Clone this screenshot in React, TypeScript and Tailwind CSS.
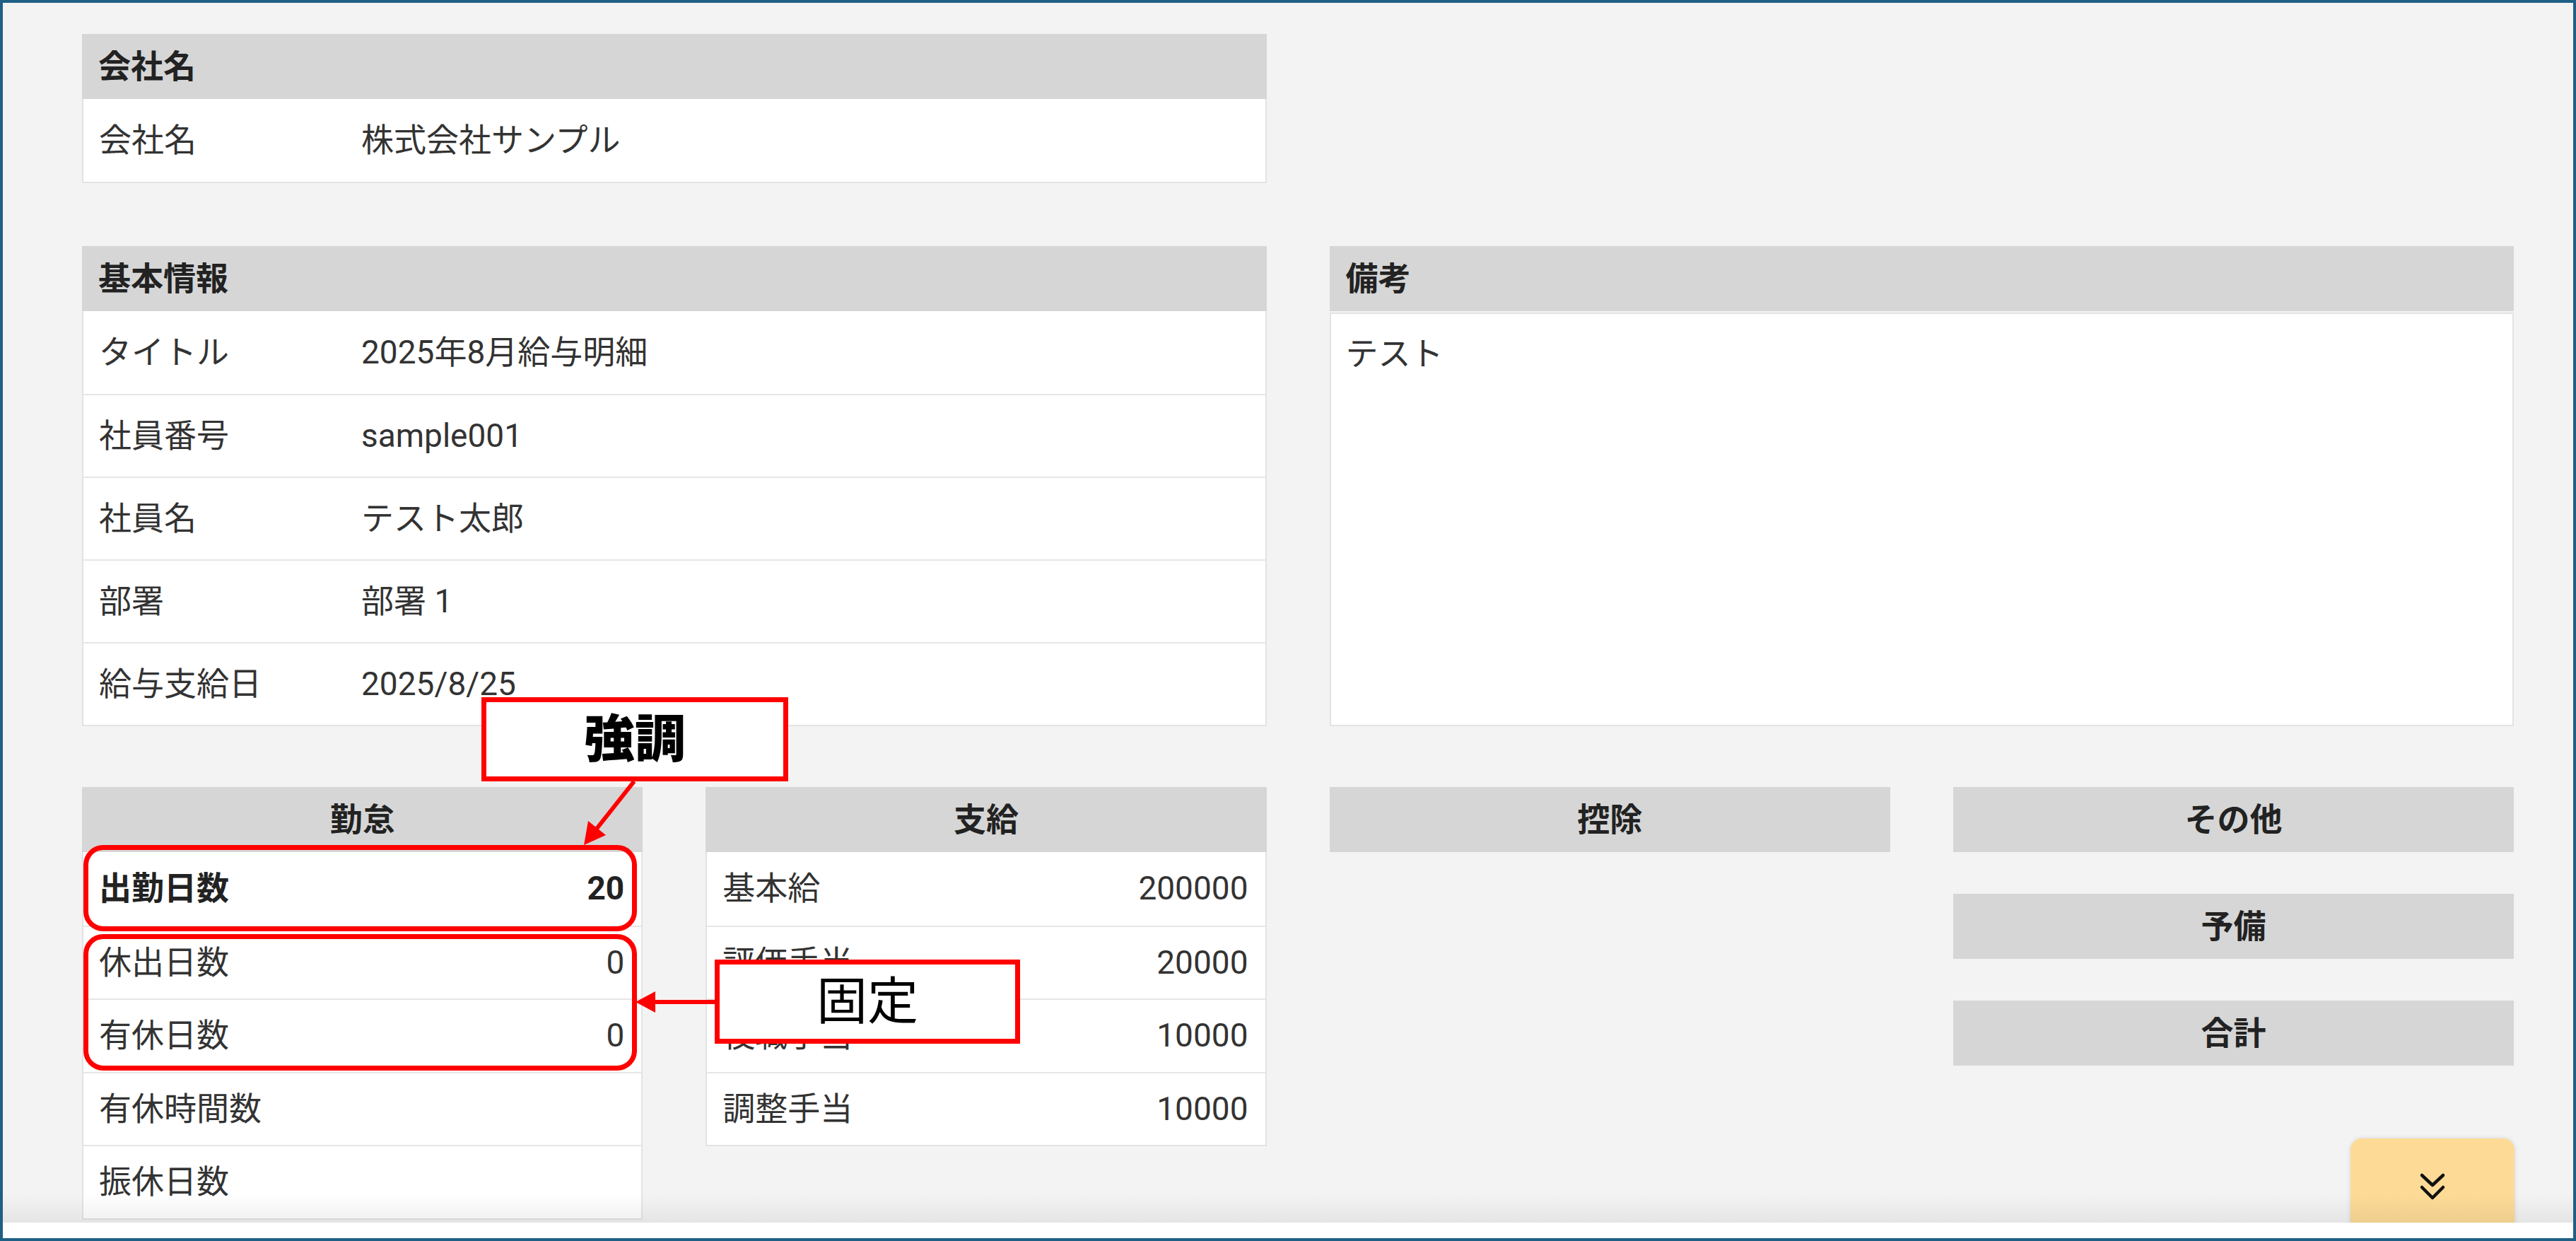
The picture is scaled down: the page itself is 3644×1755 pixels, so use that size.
import { ReactNode } from "react";

const basicInfo = [
  ["タイトル", "2025年8月給与明細"],
  ["社員番号", "sample001"],
  ["社員名", "テスト太郎"],
  ["部署", "部署 1"],
  ["給与支給日", "2025/8/25"],
];

type Item = { label: string; value?: string; strong?: boolean };

const attendance: Item[] = [
  { label: "出勤日数", value: "20", strong: true },
  { label: "休出日数", value: "0" },
  { label: "有休日数", value: "0" },
  { label: "有休時間数" },
  { label: "振休日数" },
];

const payments: Item[] = [
  { label: "基本給", value: "200000" },
  { label: "評価手当", value: "20000" },
  { label: "役職手当", value: "10000" },
  { label: "調整手当", value: "10000" },
];

function Header({ children, center }: { children: ReactNode; center?: boolean }) {
  return (
    <div
      className={`h-[92px] bg-[#d6d6d6] flex items-center font-bold text-[#222] ${
        center ? "justify-center" : "px-[23px]"
      }`}
    >
      {children}
    </div>
  );
}

function Card({ title, children }: { title: string; children: ReactNode }) {
  return (
    <div className="flex flex-col">
      <Header>{title}</Header>
      <div className="bg-white border-x-2 border-b-2 border-[#e3e3e3]">{children}</div>
    </div>
  );
}

function InfoRow({ label, value, h }: { label: string; value: string; h: string }) {
  return (
    <div className={`${h} flex items-center px-[22px] border-t-2 border-[#e6e6e6] first:border-t-0`}>
      <span className="w-[371px] shrink-0">{label}</span>
      <span>{value}</span>
    </div>
  );
}

function AmountList({ title, items }: { title: string; items: Item[] }) {
  return (
    <div className="flex flex-col">
      <Header center>{title}</Header>
      <div className="bg-white border-x-2 border-b-2 border-[#e3e3e3]">
        {items.map((it) => (
          <div
            key={it.label}
            className={`h-[103.5px] flex items-center justify-between pl-[22px] pr-[24px] border-t-2 border-[#e6e6e6] first:border-t-0 ${
              it.strong ? "font-bold text-[#222]" : ""
            }`}
          >
            <span>{it.label}</span>
            <span>{it.value ?? ""}</span>
          </div>
        ))}
      </div>
    </div>
  );
}

export default function App() {
  return (
    <div className="relative w-[3644px] h-[1755px] border-4 border-[#1f5f86] bg-white overflow-hidden font-[Roboto,'Noto_Sans_CJK_JP',sans-serif] text-[46px] leading-normal text-[#333]">
      <div className="relative h-[1725px] bg-[#f3f3f3] overflow-hidden">
        <div className="w-[3552px] pl-[112px] pt-[44px] flex flex-col">
          <div className="grid grid-cols-4 gap-x-[89px]">
            <div className="col-span-2">
              <Card title="会社名">
                <InfoRow h="h-[117px]" label="会社名" value="株式会社サンプル" />
              </Card>
            </div>
          </div>

          <div className="grid grid-cols-4 gap-x-[89px] mt-[89px]">
            <div className="col-span-2">
              <Card title="基本情報">
                {basicInfo.map(([l, v]) => (
                  <InfoRow key={l} h="h-[117px]" label={l} value={v} />
                ))}
              </Card>
            </div>
            <div className="col-span-2 flex flex-col">
              <Header>備考</Header>
              <div className="flex-1 mt-[2px] bg-white border-2 border-[#e3e3e3] px-[21px] pt-[22px]">テスト</div>
            </div>
          </div>

          <div className="grid grid-cols-4 gap-x-[89px] mt-[86px] items-start">
            <AmountList title="勤怠" items={attendance} />
            <AmountList title="支給" items={payments} />
            <Header center>控除</Header>
            <div className="flex flex-col gap-[59px]">
              <Header center>その他</Header>
              <Header center>予備</Header>
              <Header center>合計</Header>
            </div>
          </div>
        </div>

        {/* floating scroll button */}
        <div className="absolute left-[3321px] top-[1606px] w-[232px] h-[160px] rounded-t-[16px] bg-[#fddb96] shadow-[0_0_6px_rgba(0,0,0,0.12)] flex justify-center pt-[48px]">
          <svg width="40" height="42" viewBox="0 0 40 42" fill="none" stroke="#111" strokeWidth="4.5" strokeLinecap="round" strokeLinejoin="round">
            <path d="M5 4 L20 18 L35 4" />
            <path d="M5 21 L20 36 L35 21" />
          </svg>
        </div>

        <div className="pointer-events-none absolute left-0 right-0 bottom-0 h-[40px] bg-linear-to-b from-transparent to-black/[0.06]" />
      </div>

      {/* annotations */}
      <div className="absolute left-[114px] top-[1191px] w-[783px] h-[122px] border-[7px] border-[#ff0000] rounded-[28px]" />
      <div className="absolute left-[114px] top-[1317px] w-[783px] h-[193px] border-[7px] border-[#ff0000] rounded-[28px]" />

      <svg className="absolute left-0 top-0 pointer-events-none" width="3636" height="1747" viewBox="4 4 3636 1747">
        <line x1="897" y1="1105" x2="844" y2="1172" stroke="#ff0000" strokeWidth="6" />
        <polygon points="826,1195 857,1181 832,1161" fill="#ff0000" />
        <line x1="1012" y1="1417" x2="922" y2="1417" stroke="#ff0000" strokeWidth="6" />
        <polygon points="899,1417 927,1402 927,1432" fill="#ff0000" />
      </svg>

      <div className="absolute left-[677px] top-[982px] w-[434px] h-[119px] border-[7px] border-[#ff0000] bg-white flex items-center justify-center text-[72px] font-black text-black leading-none">
        強調
      </div>
      <div className="absolute left-[1007px] top-[1353px] w-[432px] h-[119px] border-[7px] border-[#ff0000] bg-white flex items-center justify-center text-[72px] font-normal text-black leading-none">
        固定
      </div>
    </div>
  );
}
